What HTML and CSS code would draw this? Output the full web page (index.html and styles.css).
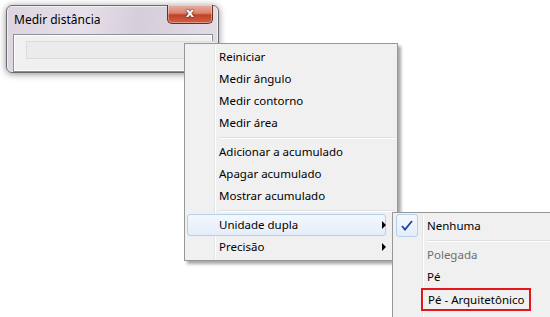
FILE: index.html
```html
<!DOCTYPE html>
<html lang="pt">
<head>
  <meta charset="UTF-8">
  <title>Medir distância</title>
  <link rel="stylesheet" href="styles.css">
</head>
<body>
  <div class="desktop">
    <div class="window">
      <div class="title-bar">
        <span class="title">Medir distância</span>
        <div class="close-btn">x</div>
      </div>
      <div class="panel">
        <div class="field"></div>
      </div>
    </div>

    <div class="menu main-menu">
      <div class="item">Reiniciar</div>
      <div class="item">Medir ângulo</div>
      <div class="item">Medir contorno</div>
      <div class="item">Medir área</div>
      <div class="sep"></div>
      <div class="item">Adicionar a acumulado</div>
      <div class="item">Apagar acumulado</div>
      <div class="item">Mostrar acumulado</div>
      <div class="sep"></div>
      <div class="item hover">Unidade dupla<span class="arrow"></span></div>
      <div class="item">Precisão<span class="arrow"></span></div>
    </div>

    <div class="menu sub-menu">
      <div class="item checked">
        <span class="check">
          <svg width="12" height="11" viewBox="0 0 12 11"><path d="M1 6 L4 9.5 L11 1" fill="none" stroke="#1f3fa8" stroke-width="1.8"/></svg>
        </span>
        Nenhuma
      </div>
      <div class="sep"></div>
      <div class="item disabled">Polegada</div>
      <div class="item">Pé</div>
      <div class="item marked"><span class="mark">Pé - Arquitetônico</span></div>
    </div>
  </div>
</body>
</html>
```

FILE: styles.css
```css
body {
  margin: 0;
  background: #fff;
  font-family: "Noto Sans", "Open Sans", sans-serif;
  font-size: 11.5px;
  color: #000;
  overflow: hidden;
}
.desktop {
  position: relative;
  width: 550px;
  height: 317px;
  overflow: hidden;
}

/* aero window */
.window {
  position: absolute;
  left: 6px;
  top: 5px;
  width: 211px;
  height: 66px;
  border: 1px solid #6b6b6e;
  border-radius: 6px;
  background: linear-gradient(100deg, #dcd5df 0%, #e6e0ea 35%, #d6cedb 60%, #e3dde6 100%);
  box-shadow: 0 1px 7px rgba(0,0,0,0.45), inset 0 0 0 1px rgba(255,255,255,0.6);
  display: flex;
  flex-direction: column;
}
.title-bar {
  position: relative;
  height: 28px;
}
.title {
  position: absolute;
  left: 7px;
  top: 5px;
  font-size: 12px;
  color: #000;
}
.close-btn {
  position: absolute;
  left: 160px;
  top: -1px;
  width: 44px;
  height: 18px;
  border: 1px solid #6d2d22;
  border-top: none;
  border-radius: 0 0 5px 5px;
  background: linear-gradient(#eab0a2 0%, #d98470 45%, #c24227 55%, #cf6148 100%);
  box-shadow: inset 0 0 0 1px rgba(255,255,255,0.35);
  color: #fff;
  font-family: "DejaVu Sans", sans-serif;
  font-weight: bold;
  font-size: 13px;
  line-height: 15px;
  text-align: center;
  text-shadow: 0 0 2px #4a1208, 0 0 1px #4a1208;
}
.panel {
  margin: 1px 5px 0 6px;
  height: 31px;
  border: 1px solid #8e8e94;
  background: #f0f0f0;
  box-shadow: inset 0 0 0 1px #fff;
  padding: 6px 0 0 12px;
}
.field {
  width: 190px;
  height: 16px;
  border: 1px solid #dcdcdc;
  background: #ebebeb;
}

/* context menus */
.menu {
  position: absolute;
  background: #f0f0f0;
  border: 1px solid #979797;
  padding: 2px;
  box-shadow: 3px 3px 3px rgba(0,0,0,0.35);
}
.menu::before {
  content: "";
  position: absolute;
  top: 2px;
  bottom: 2px;
  left: 29px;
  width: 1px;
  background: #e2e3e3;
  border-right: 1px solid #fff;
}
.main-menu {
  left: 184px;
  top: 43px;
  width: 208px;
}
.sub-menu {
  left: 392px;
  top: 212px;
  width: 200px;
  height: 120px;
}
.item {
  position: relative;
  box-sizing: border-box;
  height: 22px;
  line-height: 22px;
  padding-left: 32px;
  margin-right: 9px;
  white-space: nowrap;
}
.item.hover {
  line-height: 20px;
  padding-left: 31px;
  border: 1px solid #b5cfee;
  border-radius: 3px;
  background: linear-gradient(#f4f8fd, #e3edfa);
}
.arrow {
  position: absolute;
  right: 0;
  top: 7px;
  width: 0;
  height: 0;
  border-left: 4px solid #000;
  border-top: 4px solid transparent;
  border-bottom: 4px solid transparent;
}
.item.hover .arrow {
  right: -1px;
  top: 6px;
}
.sep {
  height: 7px;
  margin-left: 30px;
  position: relative;
}
.sep::after {
  content: "";
  position: absolute;
  left: 2px;
  right: 0;
  top: 3px;
  height: 1px;
  background: #e0e0e0;
  border-bottom: 1px solid #fff;
}
.check {
  position: absolute;
  left: 1px;
  top: -1px;
  width: 20px;
  height: 21px;
  border: 1px solid #b5cfee;
  border-radius: 3px;
  background: linear-gradient(#f4f8fd, #e3edfa);
  display: flex;
  align-items: center;
  justify-content: center;
}
.disabled {
  color: #6d6d6d;
}
.mark {
  display: inline-block;
  margin-left: -6px;
  padding: 0 5px;
  height: 19px;
  line-height: 19px;
  border: 2px solid #e5141b;
}
```
